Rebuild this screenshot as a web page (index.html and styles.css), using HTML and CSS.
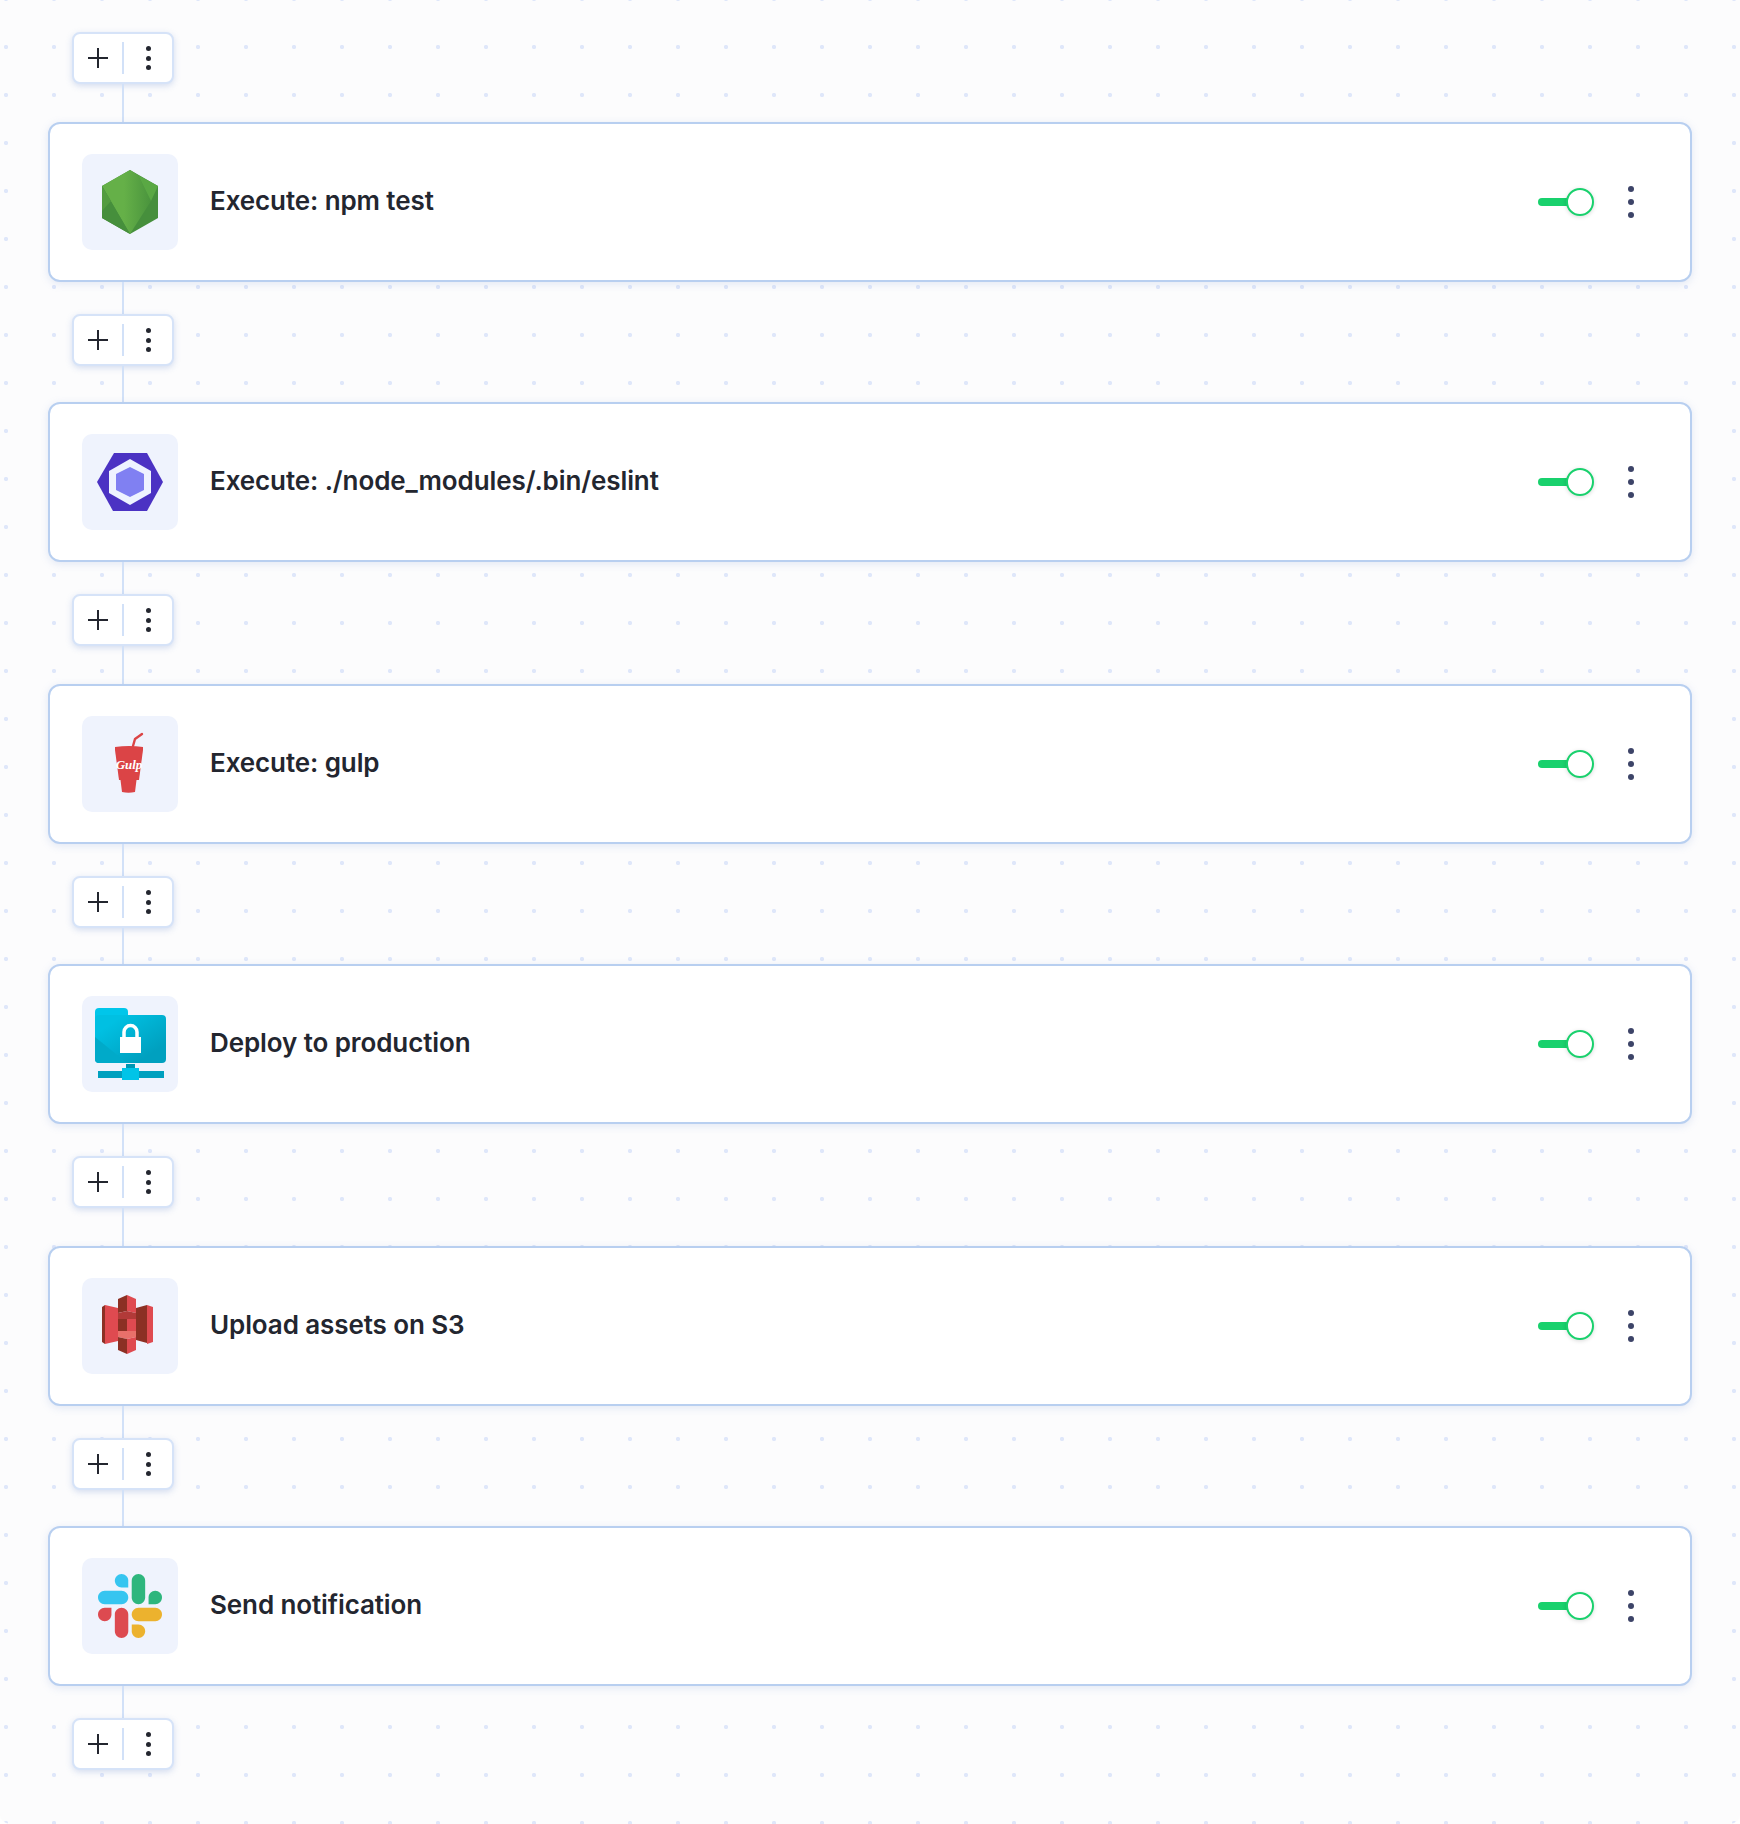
FILE: index.html
```html
<!DOCTYPE html>
<html lang="en">
<head>
    <meta charset="UTF-8">
    <title>Pipeline</title>
    <link rel="stylesheet" href="styles.css">
</head>
<body>
    <div class="pipeline">
        <div class="toolbar">
            <button class="tool-add"><svg width="24" height="24" viewBox="0 0 24 24"><path d="M12 2v20M2 12h20"/></svg></button>
            <button class="tool-more"><i></i><i></i><i></i></button>
        </div>
        <div class="line line-long"></div>

        <!-- npm test -->
        <div class="step">
            <div class="step-icon">
                <svg width="96" height="96" viewBox="0 0 96 96">
                    <defs>
                        <linearGradient id="nodeCenter" x1="0" y1="0" x2="1" y2="0">
                            <stop offset="0.45" stop-color="#65b048"/>
                            <stop offset="1" stop-color="#4a943d"/>
                        </linearGradient>
                    </defs>
                    <polygon points="48,16 76,32 76,64 48,80 20,64 20,32" fill="#468f3c"/>
                    <polygon points="48,16 20,32 48,80 69,47 56,21" fill="url(#nodeCenter)"/>
                    <polygon points="20,32 20,64 48,80" fill="#468f3c"/>
                    <polygon points="20,32 29,47 20,57" fill="#539c40"/>
                    <polygon points="56,21 76,32 69,47" fill="#5aa844"/>
                </svg>
            </div>
            <div class="step-name">Execute: npm test</div>
            <div class="toggle"><span class="toggle-knob"></span></div>
            <button class="step-more"><i></i><i></i><i></i></button>
        </div>
        <div class="line"></div>
        <div class="toolbar">
            <button class="tool-add"><svg width="24" height="24" viewBox="0 0 24 24"><path d="M12 2v20M2 12h20"/></svg></button>
            <button class="tool-more"><i></i><i></i><i></i></button>
        </div>
        <div class="line line-short"></div>

        <!-- eslint -->
        <div class="step">
            <div class="step-icon">
                <svg width="96" height="96" viewBox="0 0 96 96">
                    <polygon points="32,19 65,19 81,48 65,77 31,77 15,48" fill="#4b32c3"/>
                    <polygon points="48,25 69,37 69,59 48,71 27,59 27,37" fill="#eef3ff"/>
                    <polygon points="48,33 62,40 62,56 48,63 34,56 34,40" fill="#8080f2"/>
                </svg>
            </div>
            <div class="step-name">Execute: ./node_modules/.bin/eslint</div>
            <div class="toggle"><span class="toggle-knob"></span></div>
            <button class="step-more"><i></i><i></i><i></i></button>
        </div>
        <div class="line"></div>
        <div class="toolbar">
            <button class="tool-add"><svg width="24" height="24" viewBox="0 0 24 24"><path d="M12 2v20M2 12h20"/></svg></button>
            <button class="tool-more"><i></i><i></i><i></i></button>
        </div>
        <div class="line line-long"></div>

        <!-- gulp -->
        <div class="step">
            <div class="step-icon">
                <svg width="96" height="96" viewBox="0 0 96 96">
                    <path d="M51 30l2-7 7-5" fill="none" stroke="#db4446" stroke-width="2.4" stroke-linecap="round" stroke-linejoin="round"/>
                    <path d="M33 31q14-2 28 0v3l-4 30h-20l-4-30z" fill="#db4446"/>
                    <path d="M38.500 64h16l-1.500 12q-6.500 1.500-13 0z" fill="#db4446"/>
                    <text class="gulp-label" x="47" y="53" text-anchor="middle">Gulp</text>
                </svg>
            </div>
            <div class="step-name">Execute: gulp</div>
            <div class="toggle"><span class="toggle-knob"></span></div>
            <button class="step-more"><i></i><i></i><i></i></button>
        </div>
        <div class="line"></div>
        <div class="toolbar">
            <button class="tool-add"><svg width="24" height="24" viewBox="0 0 24 24"><path d="M12 2v20M2 12h20"/></svg></button>
            <button class="tool-more"><i></i><i></i><i></i></button>
        </div>
        <div class="line line-short"></div>

        <!-- deploy -->
        <div class="step">
            <div class="step-icon">
                <svg width="96" height="96" viewBox="0 0 96 96">
                    <defs>
                        <linearGradient id="folderBody" x1="0" y1="0" x2="1" y2="1">
                            <stop offset="0.2" stop-color="#00c0e2"/>
                            <stop offset="0.8" stop-color="#00a0bf"/>
                        </linearGradient>
                    </defs>
                    <rect x="13" y="12" width="33" height="20" rx="4" fill="#00c6ea"/>
                    <rect x="13" y="19" width="71" height="48" rx="4" fill="url(#folderBody)"/>
                    <path d="M13 41l32 26h-28a4 4 0 0 1-4-4z" fill="#00aac9"/>
                    <path d="M42 41v-5a6.500 6.500 0 0 1 13 0v5" fill="none" stroke="#fff" stroke-width="3.500"/>
                    <rect x="38" y="41" width="21" height="16" fill="#fff"/>
                    <rect x="44" y="68" width="9" height="5" fill="#0097b4"/>
                    <rect x="16" y="75" width="66" height="7" fill="#00a0bf"/>
                    <rect x="40" y="72" width="17" height="12" fill="#00c4e8"/>
                </svg>
            </div>
            <div class="step-name">Deploy to production</div>
            <div class="toggle"><span class="toggle-knob"></span></div>
            <button class="step-more"><i></i><i></i><i></i></button>
        </div>
        <div class="line"></div>
        <div class="toolbar">
            <button class="tool-add"><svg width="24" height="24" viewBox="0 0 24 24"><path d="M12 2v20M2 12h20"/></svg></button>
            <button class="tool-more"><i></i><i></i><i></i></button>
        </div>
        <div class="line line-long"></div>

        <!-- s3 -->
        <div class="step">
            <div class="step-icon">
                <svg width="96" height="96" viewBox="0 0 96 96">
                    <polygon points="20,29 23,27 23,66 20,64" fill="#8c3024"/>
                    <polygon points="23,27 36,30 36,63 23,66" fill="#df4a50"/>
                    <polygon points="54,30 65,27 65,65 54,62" fill="#8c3024"/>
                    <polygon points="65,27 71,29 71,64 65,66" fill="#df4a50"/>
                    <polygon points="36,21 45,17 45,33 36,35" fill="#8c3024"/>
                    <polygon points="45,17 54,21 54,35 45,33" fill="#df4a50"/>
                    <polygon points="36,35 45,33 54,35 54,41 36,41" fill="#b23a38"/>
                    <polygon points="36,41 45,41 45,53 36,53" fill="#8c3024"/>
                    <polygon points="45,41 54,41 54,53 45,53" fill="#df4a50"/>
                    <polygon points="36,53 54,53 54,59 45,61 36,59" fill="#e8706a"/>
                    <polygon points="36,59 45,61 45,76 36,72" fill="#8c3024"/>
                    <polygon points="45,61 54,59 54,72 45,76" fill="#df4a50"/>
                </svg>
            </div>
            <div class="step-name">Upload assets on S3</div>
            <div class="toggle"><span class="toggle-knob"></span></div>
            <button class="step-more"><i></i><i></i><i></i></button>
        </div>
        <div class="line"></div>
        <div class="toolbar">
            <button class="tool-add"><svg width="24" height="24" viewBox="0 0 24 24"><path d="M12 2v20M2 12h20"/></svg></button>
            <button class="tool-more"><i></i><i></i><i></i></button>
        </div>
        <div class="line line-short"></div>

        <!-- slack -->
        <div class="step">
            <div class="step-icon">
                <svg width="64" height="64" viewBox="0 0 122.800 122.800">
                    <path d="M25.800 77.600c0 7.100-5.800 12.900-12.900 12.900S0 84.700 0 77.600s5.800-12.900 12.900-12.900h12.900v12.900z" fill="#dd4a50"/>
                    <path d="M32.300 77.600c0-7.100 5.800-12.900 12.900-12.900s12.900 5.800 12.900 12.900v32.300c0 7.100-5.800 12.900-12.900 12.900s-12.900-5.800-12.900-12.900V77.600z" fill="#dd4a50"/>
                    <path d="M45.200 25.800c-7.100 0-12.900-5.800-12.900-12.900S38.100 0 45.200 0s12.900 5.800 12.900 12.900v12.900H45.200z" fill="#36c5f0"/>
                    <path d="M45.200 32.300c7.100 0 12.900 5.800 12.900 12.900s-5.800 12.900-12.900 12.900H12.900C5.800 58.100 0 52.300 0 45.200s5.800-12.900 12.900-12.900h32.300z" fill="#36c5f0"/>
                    <path d="M97 45.200c0-7.100 5.800-12.900 12.900-12.900s12.900 5.800 12.900 12.900-5.800 12.900-12.900 12.900H97V45.200z" fill="#2eb67d"/>
                    <path d="M90.500 45.200c0 7.100-5.800 12.900-12.900 12.900s-12.900-5.800-12.900-12.900V12.900C64.700 5.800 70.500 0 77.600 0s12.900 5.800 12.900 12.900v32.300z" fill="#2eb67d"/>
                    <path d="M77.600 97c7.100 0 12.900 5.800 12.900 12.900s-5.800 12.900-12.900 12.900-12.900-5.800-12.900-12.900V97h12.900z" fill="#ecb22e"/>
                    <path d="M77.600 90.500c-7.100 0-12.900-5.800-12.900-12.900s5.800-12.900 12.900-12.900h32.300c7.100 0 12.900 5.800 12.900 12.900s-5.800 12.900-12.900 12.900H77.600z" fill="#ecb22e"/>
                </svg>
            </div>
            <div class="step-name">Send notification</div>
            <div class="toggle"><span class="toggle-knob"></span></div>
            <button class="step-more"><i></i><i></i><i></i></button>
        </div>
        <div class="line"></div>
        <div class="toolbar">
            <button class="tool-add"><svg width="24" height="24" viewBox="0 0 24 24"><path d="M12 2v20M2 12h20"/></svg></button>
            <button class="tool-more"><i></i><i></i><i></i></button>
        </div>
    </div>
</body>
</html>
```

FILE: styles.css
```css
* {
    margin: 0;
    padding: 0;
    box-sizing: border-box;
}

html {
    background: #fff;
}

body {
    height: 1824px;
    overflow: hidden;
    font-family: 'Inter', 'Liberation Sans', sans-serif;
    color: #23262f;
    border-radius: 0 0 10px 10px;
    background-color: #fcfcfd;
    background-image: radial-gradient(circle, #dfe7fa 1.7px, transparent 2.5px);
    background-size: 48px 48px;
    background-position: -18px 23px;
}

.pipeline {
    display: flex;
    flex-direction: column;
    padding: 32px 48px 0;
}

/* 连接线 */
.line {
    width: 2px;
    height: 32px;
    margin-left: 74px;
    background: #d2e1f8;
}

.line-long {
    height: 38px;
}

.line-short {
    height: 36px;
}

/* 小工具条 */
.toolbar {
    display: flex;
    align-items: center;
    align-self: flex-start;
    width: 102px;
    height: 52px;
    margin-left: 24px;
    background: #fff;
    border: 2px solid #d6e3f8;
    border-radius: 8px;
    box-shadow: 0 2px 6px rgba(120, 150, 210, 0.3);
}

.toolbar button {
    display: flex;
    align-items: center;
    justify-content: center;
    background: none;
    border: none;
    height: 32px;
}

.toolbar .tool-add {
    width: 50px;
    border-right: 2px solid #d2e1f8;
}

.tool-add svg {
    stroke: #23262f;
    stroke-width: 2;
    fill: none;
}

.tool-more {
    flex: 1;
    flex-direction: column;
    gap: 4.5px;
}

.tool-more i {
    width: 5px;
    height: 5px;
    border-radius: 50%;
    background: #23262f;
}

/* 步骤卡片 */
.step {
    display: flex;
    align-items: center;
    height: 160px;
    padding: 0 56px 0 32px;
    background: #fff;
    border: 2px solid #b8cff0;
    border-radius: 12px;
    box-shadow: 0 2px 8px rgba(120, 150, 210, 0.2);
}

.step-icon {
    display: flex;
    align-items: center;
    justify-content: center;
    flex: none;
    width: 96px;
    height: 96px;
    background: #eff3fd;
    border-radius: 10px;
}

.gulp-label {
    font-family: 'Liberation Serif', serif;
    font-style: italic;
    font-weight: 700;
    font-size: 13px;
    fill: #fff;
}

.step-name {
    flex: 1;
    margin-left: 32px;
    padding-bottom: 4px;
    font-size: 26px;
    font-weight: 600;
    letter-spacing: -0.1px;
}

.toggle {
    position: relative;
    width: 42px;
    height: 8px;
    margin-right: 48px;
    background: #19d16d;
    border-radius: 4px;
}

.toggle-knob {
    position: absolute;
    top: -10px;
    right: -14px;
    width: 28px;
    height: 28px;
    background: #fff;
    border: 2px solid #19d16d;
    border-radius: 50%;
    box-shadow: 0 1px 4px rgba(0, 0, 0, 0.15);
}

.step-more {
    display: flex;
    flex-direction: column;
    gap: 7px;
    background: none;
    border: none;
}

.step-more i {
    width: 6px;
    height: 6px;
    border-radius: 50%;
    background: #3d4468;
}
```
